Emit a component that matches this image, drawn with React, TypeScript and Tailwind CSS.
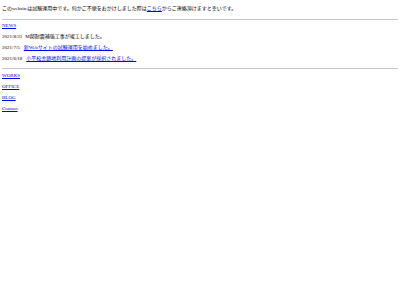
const serif = "font-['Liberation_Serif','Noto_Sans_CJK_JP',serif]";

const news = [
  { date: "2021/8/31", text: "M邸耐震補強工事が竣工しました。", link: false },
  { date: "2021/7/5", text: "新Webサイトの試験運用を始めました。", link: true },
  { date: "2021/6/18", text: "小平校舎跡地利用計画の提案が採択されました。", link: true },
];

const menu = ["WORKS", "OFFICE", "BLOG", "Contact"];

export default function App() {
  return (
    <div className={`h-[300px] w-[400px] bg-white px-[2px] text-[5px] leading-[6px] text-black ${serif}`}>
      <p className="pt-[6px]">
        このwebsiteは試験運用中です。何かご不便をおかけしました際は
        <a className="text-[#0000ee] underline" href="#">
          こちら
        </a>
        からご連絡頂けますと幸いです。
      </p>
      <hr className="mt-[7px] border-t border-[#c8c8c8]" />
      <a className="mt-[3px] block w-fit text-[#0000ee] underline" href="#">
        NEWS
      </a>
      <div className="mt-[5px] flex flex-col gap-[5px]">
        {news.map((item) => (
          <p key={item.date} className="flex gap-[3px]">
            <span>{item.date}</span>
            {item.link ? (
              <a className="ml-[1px] text-[#0000ee] underline" href="#">
                {item.text}
              </a>
            ) : (
              <span>{item.text}</span>
            )}
          </p>
        ))}
      </div>
      <hr className="mt-[6px] border-t border-[#c8c8c8]" />
      <nav className="mt-[4px] flex flex-col gap-[5px]">
        {menu.map((label) => (
          <a key={label} className="block w-fit text-[#0000ee] underline" href="#">
            {label}
          </a>
        ))}
      </nav>
    </div>
  );
}
